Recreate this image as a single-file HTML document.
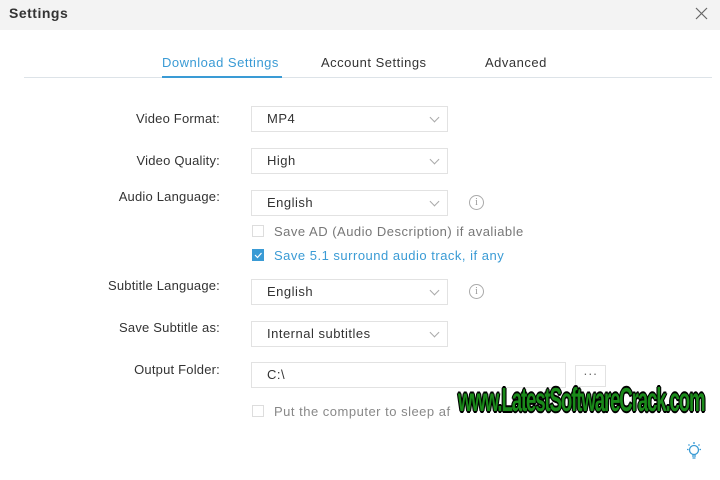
<!DOCTYPE html>
<html><head><style>
body{margin:0;width:720px;height:480px;background:#fff;font-family:"Liberation Sans",sans-serif;position:relative;overflow:hidden;color:#333;letter-spacing:0.5px}
.a{position:absolute}
.hdr{left:0;top:0;width:720px;height:30px;background:#f3f3f3}
.lbl{font-size:13px;color:#333;right:500px;text-align:right;white-space:nowrap;letter-spacing:0.2px}
.box{border:1px solid #e2e2e2;background:#fff;font-size:13px;color:#333;box-sizing:border-box;padding-left:15px;line-height:24px}
.chev{position:absolute;right:9px;top:7px;width:6px;height:6px;border-right:1px solid #aaa;border-bottom:1px solid #aaa;transform:rotate(45deg)}
.cb{width:12px;height:12px;border:1px solid #ddd;box-sizing:border-box;background:#fff}
.info{width:15px;height:15px;border:1px solid #aaa;border-radius:50%;box-sizing:border-box;font-size:10px;color:#999;text-align:center;line-height:13px;font-family:"Liberation Serif",serif;letter-spacing:0}
</style></head><body>
<div class="a hdr"></div>
<div class="a" style="left:9px;top:5px;font-size:14px;font-weight:bold;color:#333">Settings</div>
<svg class="a" style="left:695px;top:7px" width="13" height="13"><path d="M1 1L12 12M12 1L1 12" stroke="#666" stroke-width="1.2"/></svg>
<div class="a" style="left:162px;top:55px;font-size:13px;color:#3a9bd5">Download Settings</div>
<div class="a" style="left:321px;top:55px;font-size:13px;color:#333">Account Settings</div>
<div class="a" style="left:485px;top:55px;font-size:13px;color:#333">Advanced</div>
<div class="a" style="left:24px;top:77px;width:688px;height:1px;background:#dde3e8"></div>
<div class="a" style="left:162px;top:76px;width:120px;height:2px;background:#3a9bd5"></div>

<div class="a lbl" style="top:111px">Video Format:</div>
<div class="a box" style="left:251px;top:106px;width:197px;height:26px">MP4<span class="chev"></span></div>
<div class="a lbl" style="top:153px">Video Quality:</div>
<div class="a box" style="left:251px;top:148px;width:197px;height:26px">High<span class="chev"></span></div>
<div class="a lbl" style="top:189px">Audio Language:</div>
<div class="a box" style="left:251px;top:190px;width:197px;height:26px">English<span class="chev"></span></div>
<div class="a info" style="left:469px;top:195px">i</div>
<div class="a cb" style="left:252px;top:225px"></div>
<div class="a" style="left:274px;top:224px;font-size:13px;color:#777">Save AD (Audio Description) if avaliable</div>
<div class="a cb" style="left:252px;top:249px;background:#3a9bd5;border-color:#3a9bd5"><svg width="10" height="10" style="position:absolute;left:0;top:0"><path d="M2 5L4.5 7.5L8.5 3" stroke="#fff" stroke-width="1.2" fill="none"/></svg></div>
<div class="a" style="left:274px;top:248px;font-size:13px;color:#3a9bd5">Save 5.1 surround audio track, if any</div>
<div class="a lbl" style="top:278px">Subtitle Language:</div>
<div class="a box" style="left:251px;top:279px;width:197px;height:26px">English<span class="chev"></span></div>
<div class="a info" style="left:469px;top:284px">i</div>
<div class="a lbl" style="top:320px">Save Subtitle as:</div>
<div class="a box" style="left:251px;top:321px;width:197px;height:26px">Internal subtitles<span class="chev"></span></div>
<div class="a lbl" style="top:362px">Output Folder:</div>
<div class="a box" style="left:251px;top:362px;width:315px;height:26px">C:\</div>
<div class="a box" style="left:575px;top:365px;width:31px;height:22px;padding:0;text-align:center;line-height:16px;color:#666">···</div>
<div class="a cb" style="left:252px;top:405px"></div>
<div class="a" style="left:274px;top:404px;font-size:13px;color:#888">Put the computer to sleep af</div>
<div class="a" style="left:458px;top:381px;font-size:33px;font-weight:bold;color:#1a8a1a;letter-spacing:-2px;transform:scaleX(0.565);transform-origin:left top;white-space:nowrap;text-shadow:-2px 0 #000,2px 0 #000,0 -2px #000,0 2px #000,-1px -1px #000,1px 1px #000,-1px 1px #000,1px -1px #000">www.LatestSoftwareCrack.com</div>
<svg class="a" style="left:684px;top:441px" width="20" height="20"><g stroke="#3a9bd5" fill="none" stroke-width="1.3"><circle cx="10" cy="9" r="4.5"/><path d="M8 15h4M8.5 17h3M10 1v2M3 8.5h1.5M15.5 8.5h1.5M4.5 3.5l1 1M15.5 3.5l-1 1"/></g></svg>
</body></html>
